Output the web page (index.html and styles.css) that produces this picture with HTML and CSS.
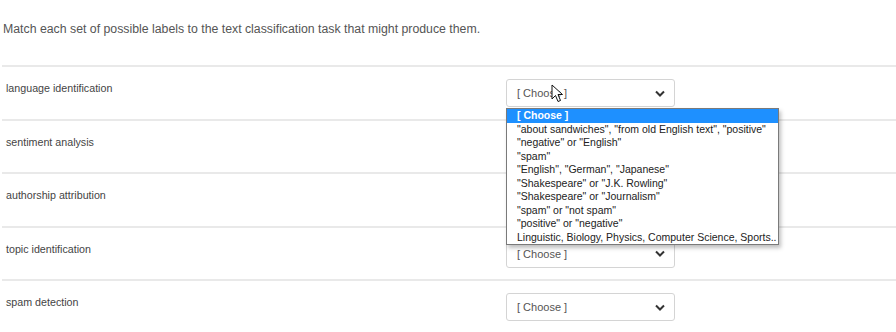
FILE: index.html
```html
<!DOCTYPE html>
<html lang="en">
<head>
  <meta charset="UTF-8" />
  <meta name="viewport" content="width=device-width, initial-scale=1.0"/>
  <title>Matching Question</title>
  <link rel="stylesheet" href="styles.css">
</head>
<body>
  <div class="question">
    <p class="intro">Match each set of possible labels to the text classification task that might produce them.</p>

    <div class="answers">
      <div class="row">
        <div class="label">language identification</div>
        <div class="choice">
          <div class="select">
            <span>[ Choose ]</span>
            <svg class="chevron" width="10" height="7" viewBox="0 0 10 7"><path d="M1 1.5 L5 5.5 L9 1.5" fill="none" stroke="#333" stroke-width="2"/></svg>
          </div>
          <svg class="cursor" width="13" height="19" viewBox="0 0 13 19"><path d="M1 1 L1 15 L4.5 11.5 L7 17.5 L9.5 16.5 L7 10.5 L11.5 10.5 Z" fill="#fff" stroke="#111" stroke-width="1" stroke-linejoin="round"/></svg>
          <ul class="options">
            <li class="active">[ Choose ]</li>
            <li>"about sandwiches", "from old English text", "positive"</li>
            <li>"negative" or "English"</li>
            <li>"spam"</li>
            <li>"English", "German", "Japanese"</li>
            <li>"Shakespeare" or "J.K. Rowling"</li>
            <li>"Shakespeare" or "Journalism"</li>
            <li>"spam" or "not spam"</li>
            <li>"positive" or "negative"</li>
            <li>Linguistic, Biology, Physics, Computer Science, Sports..</li>
          </ul>
        </div>
      </div>
      <div class="row">
        <div class="label">sentiment analysis</div>
        <div class="choice">
          <div class="select">
            <span>[ Choose ]</span>
            <svg class="chevron" width="10" height="7" viewBox="0 0 10 7"><path d="M1 1.5 L5 5.5 L9 1.5" fill="none" stroke="#333" stroke-width="2"/></svg>
          </div>
        </div>
      </div>
      <div class="row">
        <div class="label">authorship attribution</div>
        <div class="choice">
          <div class="select">
            <span>[ Choose ]</span>
            <svg class="chevron" width="10" height="7" viewBox="0 0 10 7"><path d="M1 1.5 L5 5.5 L9 1.5" fill="none" stroke="#333" stroke-width="2"/></svg>
          </div>
        </div>
      </div>
      <div class="row">
        <div class="label">topic identification</div>
        <div class="choice">
          <div class="select">
            <span>[ Choose ]</span>
            <svg class="chevron" width="10" height="7" viewBox="0 0 10 7"><path d="M1 1.5 L5 5.5 L9 1.5" fill="none" stroke="#333" stroke-width="2"/></svg>
          </div>
        </div>
      </div>
      <div class="row">
        <div class="label">spam detection</div>
        <div class="choice">
          <div class="select">
            <span>[ Choose ]</span>
            <svg class="chevron" width="10" height="7" viewBox="0 0 10 7"><path d="M1 1.5 L5 5.5 L9 1.5" fill="none" stroke="#333" stroke-width="2"/></svg>
          </div>
        </div>
      </div>
    </div>
  </div>
</body>
</html>
```

FILE: styles.css
```css
body {
  font-family: "Liberation Sans", Arial, sans-serif;
  margin: 0;
  padding: 0;
  background: #ffffff;
  overflow: hidden;
}

.question {
  width: 100%;
}

.intro {
  margin: 0;
  height: 65px;
  padding: 22px 0 0 3px;
  box-sizing: border-box;
  font-size: 12.3px;
  line-height: 15px;
  color: #555;
}

.answers {
  padding-left: 2px;
}

.row {
  display: flex;
  height: 53.5px;
  box-sizing: border-box;
  border-top: 2px solid #e9e9e9;
}

.label {
  width: 504px;
  padding: 15px 0 0 4px;
  box-sizing: border-box;
  font-size: 10.7px;
  line-height: 12px;
  color: #444;
}

.choice {
  position: relative;
  margin-top: 12px;
}

.select {
  display: flex;
  align-items: center;
  justify-content: space-between;
  width: 169px;
  height: 28px;
  padding: 0 9px 0 10px;
  box-sizing: border-box;
  border: 1px solid #d4d4d4;
  border-radius: 3px;
  background: #fff;
  font-size: 11px;
  color: #555;
}

.chevron {
  display: block;
}

.cursor {
  position: absolute;
  left: 45px;
  top: 5px;
  z-index: 3;
}

.options {
  position: absolute;
  left: 0;
  top: 29px;
  z-index: 2;
  width: 273px;
  margin: 0;
  padding: 0;
  list-style: none;
  box-sizing: border-box;
  border: 1px solid #7a7a7a;
  background: #fff;
  box-shadow: 2px 3px 4px rgba(0, 0, 0, 0.25);
  font-size: 10.5px;
  line-height: 13.5px;
  color: #222;
}

.options li {
  padding-left: 10px;
  white-space: nowrap;
}

.options .active {
  background: #1e90ff;
  color: #fff;
  font-weight: bold;
}
```
